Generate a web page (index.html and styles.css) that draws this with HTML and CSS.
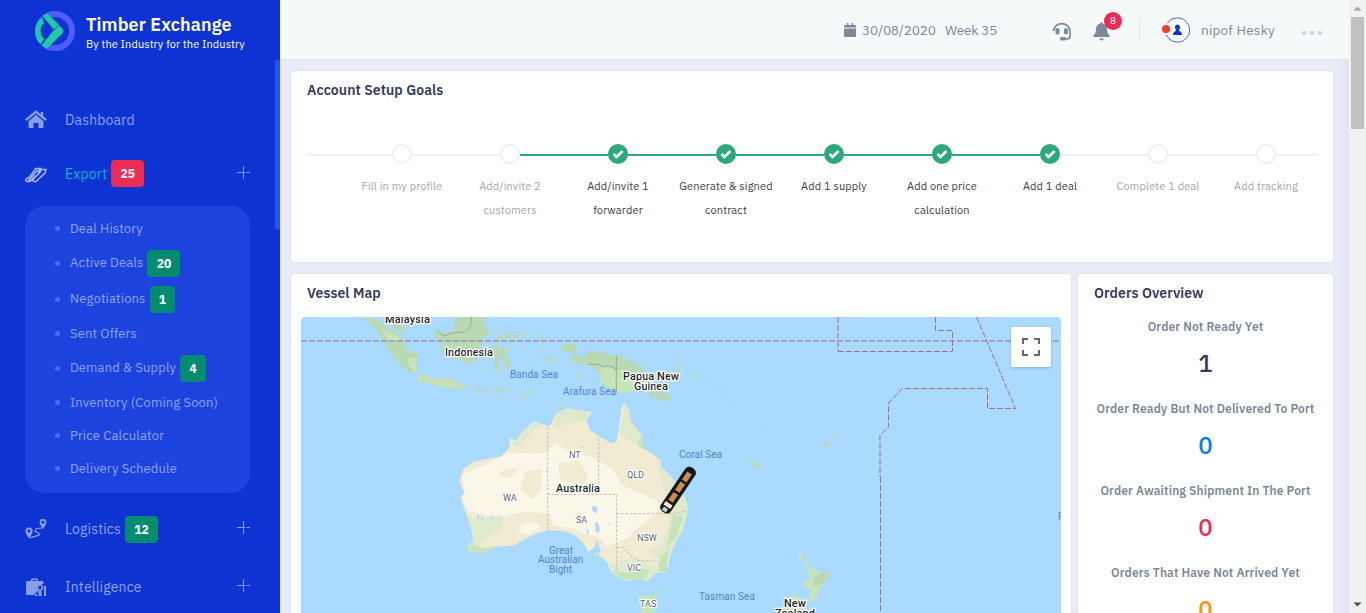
FILE: index.html
```html
<!DOCTYPE html>
<html lang="en">
<head>
<meta charset="utf-8">
<title>Timber Exchange</title>
<link rel="stylesheet" href="styles.css">
</head>
<body>
<div class="app">
  <aside class="sidebar">
    <div class="brand">
      <svg class="brand-logo" width="40" height="40" viewBox="0 0 120 120">
        <circle cx="60" cy="60" r="51" fill="none" stroke="#4e5dff" stroke-width="18"/>
        <path d="M38 7Q0 24 0 60T31 112L85 60Z" fill="#0d33d2"/>
        <path d="M22 18Q0 34 0 61T18 100L28 84Q18 76 17 59T27 38Z" fill="#23c9a4"/>
        <path d="M24 16L37 8 70 41 57 57Z" fill="#23c9a4" stroke="#23c9a4" stroke-width="3" stroke-linejoin="round"/>
        <path d="M57 58L70 42 83 56Q86 61 82 66L35 112 21 103Z" fill="#23c9a4" stroke="#23c9a4" stroke-width="3" stroke-linejoin="round"/>
        <path d="M20 15l40 44M54 60l17-18M18 100l10-14" stroke="#0d33d2" stroke-width="2"/>
      </svg>
      <div class="brand-text"><strong>Timber Exchange</strong><span>By the Industry for the Industry</span></div>
    </div>
    <nav class="menu">
      <div class="menu-item item-dashboard">
        <svg class="menu-icon" width="22" height="20" viewBox="0 0 22 20"><path d="M11 4.600L3.500 11v6q0 1 1 1h4v-5h5v5h4q1 0 1-1v-6z"/><path d="M.8 10.200L11 1.800l10.200 8.400M17 2v5" fill="none" stroke="#8b9ee9" stroke-width="2.300"/><path d="M2.500 11.300L11 4.300l8.500 7" fill="none" stroke="#0d33d2" stroke-width=".8"/></svg>
        <span class="menu-label">Dashboard</span>
      </div>
      <div class="menu-item item-export active">
        <svg class="menu-icon" width="22" height="20" viewBox="0 0 22 20"><g fill="none" stroke="#a9b7ee" stroke-width="1.500"><path d="M.7 17.500v-1.800Q7 11 9 6.500M4 17.500v-2Q9 11 12 6M8 17.500v-2Q13 11 15.500 6M9 6l2-1.500h4.500L12.500 8M15 7l1.500-1.500H21L20 9l-9 8.500H8M1 17.500h3l7-6M5 17.500l11-10"/></g></svg>
        <span class="menu-label">Export</span><b class="badge badge-red">25</b>
        <svg class="plus" width="13" height="13"><path d="M0 6.500h8M9.500 6.500H13M6.500 0v13"/></svg>
      </div>
      <ul class="submenu">
        <li><span>Deal History</span></li>
        <li class="tall"><span>Active Deals</span><b class="badge">20</b></li>
        <li class="tall"><span>Negotiations</span><b class="badge">1</b></li>
        <li><span>Sent Offers</span></li>
        <li class="tall"><span>Demand &amp; Supply</span><b class="badge">4</b></li>
        <li><span>Inventory (Coming Soon)</span></li>
        <li><span>Price Calculator</span></li>
        <li><span>Delivery Schedule</span></li>
      </ul>
      <div class="menu-item item-logistics">
        <svg class="menu-icon" width="22" height="20" viewBox="0 0 22 20"><path fill-rule="evenodd" d="M4 8.500a3.500 3.500 0 0 1 3.600 3.500Q7.500 14.500 4 19.500.4 14.500.4 12A3.500 3.500 0 0 1 4 8.500zm0 2a1.500 1.500 0 1 0 .01 0zM18 0a3.300 3.300 0 0 1 3.400 3.300Q21.300 5.500 18 10q-3.400-4.500-3.400-6.700A3.300 3.300 0 0 1 18 0zm0 1.800a1.500 1.500 0 1 0 .01 0z"/><path d="M5 18.800l9-2.600.5-1.200-4.500-3 1.500-2.500 6-.5" fill="none" stroke="#8b9ee9" stroke-width="1.200"/></svg>
        <span class="menu-label">Logistics</span><b class="badge">12</b>
        <svg class="plus" width="13" height="13"><path d="M0 6.500h8M9.500 6.500H13M6.500 0v13"/></svg>
      </div>
      <div class="menu-item item-intelligence">
        <svg class="menu-icon" width="22" height="20" viewBox="0 0 22 20"><path fill-rule="evenodd" d="M2 4h4V2.500Q6 1.500 7 1.500h5q1 0 1 1V4h4q1.500 0 1.500 1.500V7l-3 .5-3 1.500-1 3 .5 2-3 4H2.500Q1 18 1 16.500v-11Q1 4 2 4zm5.500 0h4V3h-4z"/><circle cx="15" cy="10.500" r="2.500" fill="none" stroke="#8b9ee9" stroke-width="1.400"/><path d="M10 17h2v2h-2zM13.500 14h3v5h-3zM19 9h2v10h-2z"/><path d="M13.500 12.500L10.500 15.500" stroke="#8b9ee9" stroke-width="1.500"/></svg>
        <span class="menu-label">Intelligence</span>
        <svg class="plus" width="13" height="13"><path d="M0 6.500h8M9.500 6.500H13M6.500 0v13"/></svg>
      </div>
    </nav>
    <div class="sidebar-thumb"></div>
  </aside>

  <main class="main">
    <header class="topbar">
      <svg class="calendar" width="12" height="14" viewBox="0 0 12 14" fill="#7c8a97"><path d="M1 2h2V0h1.500v2h3V0H9v2h2q1 0 1 1v1.500H0V3q0-1 1-1zM0 5.500h12V13q0 1-1 1H1q-1 0-1-1z"/></svg>
      <span class="date">30/08/2020</span>
      <span class="week">Week 35</span>
      <svg class="headset" width="20" height="20" viewBox="0 0 20 20"><path d="M1.500 10A8.300 8.300 0 0 1 18 10v5q0 3-3 3h-4" fill="none" stroke="#7c8a97" stroke-width="1.700"/><rect x="3.500" y="7" width="4" height="6.500" rx="1.800" fill="#7c8a97"/><rect x="12" y="7" width="4" height="6.500" rx="1.800" fill="#7c8a97"/><rect x="8" y="16" width="6" height="3.500" rx="1.500" fill="#7c8a97"/></svg>
      <div class="bell">
        <svg width="17" height="19" viewBox="0 0 17 19" fill="#7c8a97"><path d="M8.500 0q1.200 0 1.200 1.500 4.300 1 4.300 5.500 0 4.500 2.500 6.500.7 1.500-.8 1.500H1.300Q-.2 15 .5 13.500 3 11.500 3 7q0-4.500 4.300-5.500Q7.300 0 8.500 0zM6 16.500h5q-.5 2-2.500 2t-2.500-2z"/></svg>
        <span class="bell-count">8</span>
      </div>
      <div class="divider"></div>
      <svg class="avatar" width="30" height="28" viewBox="0 0 30 28"><circle cx="16.500" cy="14" r="12.200" fill="#fff" stroke="#4a63e8"/><path d="M16.500 8.500a2.800 2.800 0 0 1 1.500 5q0 2 1.500 2.300 1.500.4 1.500 3.200h-9q0-2.800 1.500-3.200 1.500-.3 1.500-2.300a2.800 2.800 0 0 1 1.500-5z" fill="#0d33d2"/><circle cx="5" cy="13" r="6" fill="#f5f9fa"/><circle cx="5" cy="13" r="4" fill="#ff3b1f"/></svg>
      <span class="user">nipof Hesky</span>
      <div class="more"><i></i><i></i><i></i></div>
    </header>

    <div class="content">
      <section class="card goals">
        <h2>Account Setup Goals</h2>
        <div class="steps">
          <div class="lead"></div>
          <div class="step"><div class="track"><i></i><b></b><i></i></div><p>Fill in my profile</p></div>
          <div class="step"><div class="track"><i></i><b></b><i class="on"></i></div><p>Add/invite 2<br>customers</p></div>
          <div class="step done"><div class="track"><i></i><b><svg width="12" height="10"><path d="M1.500 5l3 3 6-6"/></svg></b><i></i></div><p>Add/invite 1<br>forwarder</p></div>
          <div class="step done"><div class="track"><i></i><b><svg width="12" height="10"><path d="M1.500 5l3 3 6-6"/></svg></b><i></i></div><p>Generate &amp; signed<br>contract</p></div>
          <div class="step done"><div class="track"><i></i><b><svg width="12" height="10"><path d="M1.500 5l3 3 6-6"/></svg></b><i></i></div><p>Add 1 supply</p></div>
          <div class="step done"><div class="track"><i></i><b><svg width="12" height="10"><path d="M1.500 5l3 3 6-6"/></svg></b><i></i></div><p>Add one price<br>calculation</p></div>
          <div class="step done"><div class="track"><i></i><b><svg width="12" height="10"><path d="M1.500 5l3 3 6-6"/></svg></b><i class="off"></i></div><p>Add 1 deal</p></div>
          <div class="step"><div class="track"><i></i><b></b><i></i></div><p>Complete 1 deal</p></div>
          <div class="step"><div class="track"><i></i><b></b><i class="short"></i></div><p>Add tracking</p></div>
        </div>
      </section>

      <div class="row">
        <section class="card vessel">
          <h2>Vessel Map</h2>
          <div class="map">
            <svg width="760" height="296" viewBox="301 317 760 296">
              <!-- Indonesia, Malaysia and New Guinea -->
              <g transform="translate(290 270) scale(.33333)" fill="#b9d9b4">
                <path d="M213 138L262 150 290 173 310 181 330 199 344 218 350 240 380 256 379 310 365 308 345 300 322 276 300 245 280 220 262 186 240 162Z"/>
                <path d="M298 141L318 150 335 168 350 190 340 191 312 178Z"/>
                <path d="M498 141L585 141 583 160 600 192 580 202 576 225 556 250 555 277 530 281 510 270 470 262 455 245 452 222 433 205 434 180 450 190 480 186 495 165Z"/>
                <path d="M376 320L395 314 440 325 460 325 480 327 510 340 528 353 515 359 450 350 420 342 385 332Z" fill="#c4e1b7"/>
                <path d="M360 240L378 247 392 262 380 265ZM407 260l12 2-5 6z"/>
                <path d="M625 197L650 193 690 195 705 185 702 196 675 207 645 203 625 207 622 230 640 236 675 225 652 240 646 254 665 285 660 300 642 285 635 262 626 265 626 305 612 306 615 270 606 250 612 220Z"/>
                <path d="M748 183l8 15 8-13-3 22 7 7-12 10-4-15zM758 263l30 1 17 8-15 4-30-6zM727 268l15 2-6 7zM700 240l20 4-18 1zM535 355l18 3-8 4zM556 355l15-1 1 12-9 1zM575 362l30-4-3 8-25 1zM615 358l47 1-15 6-30-2zM608 373l25 10-4 5zM685 380l30-17 25-6-26 14-24 14zM865 306l8 15-6 11-5-9zM750 236l8 5-5 5zM235 190l8 4-3 8zM257 232l6 3-3 7z"/>
                <path d="M805 234L825 222 855 222 862 250 855 250 875 265 905 241 940 250 1000 262 1055 290 1060 312 1100 360 1140 378 1140 394 1085 382 1070 362 1045 350 1015 370 980 370 945 350 930 335 940 325 928 310 895 283 870 284 840 270 855 250 830 245Z"/>
                <path d="M928 300L955 290 1035 310 1050 350 1015 368 980 368 930 335ZM350 265L379 263 378 309 365 300ZM270 175L310 190 335 210 300 212Z" fill="#c5e4b7"/>
                <path d="M441 178q10 18 27 19 20-12 55-10 18-10 20-30l2-16M893 283q35-2 50 8 17-8 35 8M979 256v114" fill="none" stroke="#98ab9f" stroke-width="3"/>
              </g>
              <!-- Pacific islands -->
              <g transform="translate(660 270) scale(.33333)" fill="#b9d9b4">
                <path d="M35 258q28 12 38 32l-14-12zM53 286l8 10-6 14-22 4 15-10zM100 308l10 2 14 18-12-6zM135 328l14 10-4 2zM144 352l10 2-4 3zM172 346l14 8-4 4zM204 358l12 15-5-4zM188 377l15 2-4 5zM216 388l14 10-4 2zM0 365l10 2 12 16 14 8-20 2-16-6zM303 472l12 10-5 2zM318 488l6 8zM489 519q10-8 21 0v8q-12 6-20-1zM512 501l20-8-1 8-12 6zM263 567q20 4 42 31l-7 3q-25-13-35-34z"/>
              </g>
              <!-- Australia -->
              <g transform="translate(440 400) scale(.33333)">
                <path fill="#f0ebd2" d="M553 10L568 30 572 65 590 85 605 105 610 145 635 160 660 180 665 203 690 225 710 255 734 290 743 325 740 350 728 390 705 430 690 470 680 517 650 518 622 541 610 540 602 525 572 543 545 535 520 522 508 505 502 485 475 465 482 450 470 420 465 440 445 457 430 430 405 405 370 393 330 390 290 400 260 415 220 437 165 440 130 460 90 452 85 438 100 425 95 390 82 350 62 295 72 278 58 240 70 208 100 185 150 175 185 168 210 140 208 115 235 125 240 103 280 65 305 72 325 80 335 70 345 45 370 30 385 23 405 30 457 35 440 60 450 90 480 112 515 130 530 125 540 60 545 25Z"/>
                <path fill="#faf6e8" d="M64 225L120 200 200 160 320 158 345 128 380 150 440 165 490 190 525 215 545 255 600 280 650 300 660 330 610 370 560 415 500 440 475 410 430 400 400 385 340 378 330 340 250 335 190 350 140 345 90 335 66 295 75 270ZM245 372l45-5 10 15-40 24-25-10z"/>
                <path fill="#f0ebd2" d="M255 215l50-8v60l-30 30-35-30zM190 210l50-8-30 32-30-10zM355 190l60-10 30 45-15 35-70-20z"/>
                <path fill="#dfe9cc" d="M553 12L568 30 572 65 590 85 605 105 610 145 580 130 540 100ZM345 45L370 30 385 25 455 36 440 58 425 66 385 70 345 85ZM245 105L280 68 305 75 265 105 235 140 212 135ZM85 350L115 360 185 345 190 380 140 415 120 440 165 440 130 460 90 452 85 435 100 420ZM645 165L665 203 690 225 710 255 734 290 743 325 740 350 728 390 705 430 690 470 650 475 625 450 665 435 680 400 690 350 670 260ZM508 490L590 475 650 500 680 495 680 517 650 518 622 541 602 525 572 543 530 530Z"/>
                <path fill="#c7e4b9" d="M700 345l30 10-25 60-25 25zM660 470l25-20-5 65-25 2zM515 510l45 10 20-20 45 10-5 26-48 4-40-10zM605 105l8 45-20-15zM90 430l40 15 35-5-35 20-40-6zM705 250l25 35-20 5zM595 588l55-2 2 40-30 20-15-5z"/>
                <path fill="#c7e4b9" d="M345 20l20-5v8zM368 20l12-6v8zM456 462l16-8v12zM455 478l17-2v6zM588 568l8 5-3 3zM647 565l6 10-5 4z"/>
                <path fill="#aadaff" d="M456 318l15 4v18l-14-6zM466 365l8 5 6 20-8 12-5-10zM438 385l8 5-2 18zM505 370l5 3-3 8zM110 345l5 20 4-18zM122 350h10l-5 14zM152 345l6 4-2 10zM422 142l10-2-3 6zM316 213l8-3v8z"/>
                <path fill="none" stroke="#c3beb2" stroke-width="3" stroke-dasharray="8 5" d="M323 82V394M323 283H530V510M476 115V283M530 341H705L740 332M530 442h20l22 25 18 14 60 3 18 20 12 5"/>
              </g>
              <!-- New Zealand -->
              <g transform="translate(720 400) scale(.33333)">
                <path fill="#c7e4b9" d="M233 453L255 470 262 495 285 510 300 520 327 516 325 535 300 565 285 600 265 603 275 575 246 555 266 535 262 500 240 475ZM205 605l18-23 12 5 3 13 15 5-25 34h-60z"/>
                <path fill="#b9d9b4" d="M300 520l27-4-2 19-25 20-25 5 10-30zM240 462l15 10 2 18z"/>
              </g>
              <g class="borders">
                <path class="thick" d="M301 341H1061M838 317v34M880 435v42"/>
                <path d="M838 351.500H952.500V330.500H935.500V317M976.500 317L1015.500 408.500H987.500V388.500H902.500L888.500 403V427L880.500 435M880.500 477V613"/>
              </g>
              <g class="country">
                <text x="385" y="323" textLength="45">Malaysia</text>
                <text x="445" y="356" textLength="48">Indonesia</text>
                <text x="623" y="380" textLength="56">Papua New</text>
                <text x="634" y="389.500" textLength="34">Guinea</text>
                <text x="556" y="492" textLength="44">Australia</text>
                <text x="784" y="607" textLength="22">New</text>
                <text x="775" y="616.500" textLength="40">Zealand</text>
              </g>
              <g class="state">
                <text x="569" y="458">NT</text><text x="627" y="478">QLD</text><text x="503" y="501">WA</text>
                <text x="576" y="523">SA</text><text x="637" y="541">NSW</text><text x="627" y="571">VIC</text><text x="640" y="607">TAS</text>
              </g>
              <g class="sea">
                <text x="510" y="377.500" textLength="48">Banda Sea</text>
                <text x="563" y="394.500" textLength="53">Arafura Sea</text>
                <text x="679" y="457.500" textLength="43">Coral Sea</text>
                <text x="549" y="553.500" textLength="24">Great</text>
                <text x="538" y="562.500" textLength="45">Australian</text>
                <text x="549" y="572.500" textLength="23">Bight</text>
                <text x="699" y="599.500" textLength="56">Tasman Sea</text>
                <text x="1058" y="520">P</text>
              </g>
              <!-- Vessel -->
              <g transform="translate(677.800 490.500) rotate(34)">
                <rect x="-6" y="-27" width="12" height="53" rx="5" fill="#191614"/>
                <path d="M-2.700-21h5.400v9.500h-5.400zM-2.700-9h5.400V1h-5.400zM-2.700 3.500h5.400v9.500h-5.400z" fill="#c88e55"/>
                <path d="M-4 15.500h8v4h-8z" fill="#fff4df"/><path d="M-2.500 21h5v4h-5z" fill="#c9cbd2"/>
              </g>
            </svg>
            <button class="fullscreen" aria-label="Full screen"><svg width="18" height="18"><path d="M1 6V1H6M12 1h5V6M17 12v5h-5M6 17H1v-5"/></svg></button>
          </div>
        </section>

        <section class="card orders">
          <h2>Orders Overview</h2>
          <div class="stat"><h3>Order Not Ready Yet</h3><strong>1</strong></div>
          <div class="stat"><h3>Order Ready But Not Delivered To Port</h3><strong class="blue">0</strong></div>
          <div class="stat"><h3>Order Awaiting Shipment In The Port</h3><strong class="red">0</strong></div>
          <div class="stat"><h3>Orders That Have Not Arrived Yet</h3><strong class="orange">0</strong></div>
        </section>
      </div>
    </div>
  </main>

  <div class="scrollbar">
    <svg width="17" height="17"><path d="M4.500 10.500h8l-4-4z" fill="#a3a3a3"/></svg>
    <div class="scroll-thumb"></div>
    <svg width="17" height="17"><path d="M4.500 6.500h8l-4 4z" fill="#505050"/></svg>
  </div>
</div>
</body>
</html>
```
FILE: styles.css
```css
* { box-sizing: border-box; }
body { margin: 0; overflow: hidden; font-family: "IBM Plex Sans", Roboto, "Liberation Sans", sans-serif; color: #343a5c; }
h2, h3, p, ul { margin: 0; padding: 0; }
svg { display: block; flex: none; }
.app { display: flex; width: 1366px; height: 613px; overflow: hidden; background: #e9ebf7; }

/* Sidebar */
.sidebar { position: relative; flex: none; width: 280px; height: 613px; overflow: hidden; background: #0d33d2; }
.brand { display: flex; gap: 11px; height: 93px; padding: 11px 0 0 35px; color: #fff; white-space: nowrap; }
.brand-text { display: flex; flex-direction: column; padding-top: 3px; }
.brand-text strong { font-size: 18px; line-height: 22px; font-weight: 600; letter-spacing: .1px; }
.brand-text span { font-size: 11px; line-height: 16px; letter-spacing: .1px; }
.menu-item { display: flex; align-items: center; padding: 0 30px 0 25px; color: #8fa3ec; font-size: 14px; }
.menu-icon { fill: #8b9ee9; margin-right: 18px; }
.menu-label { letter-spacing: .16px; }
.item-dashboard { height: 54px; }
.item-export { height: 53px; margin-bottom: 6px; }
.active .menu-label { color: #00b5d1; }
.item-logistics { height: 58px; margin-top: 7px; }
.item-intelligence { height: 58px; }
.plus { margin: -3px 0 0 auto; fill: none; stroke: #8b9ee9; }
.badge { display: inline-flex; align-items: center; justify-content: center; height: 27px; margin-left: 4px; padding: 0 9.300px; border-radius: 4px; background: #028c6f; color: #fff; font-size: 12px; font-weight: 700; letter-spacing: 0; }
.badge-red { background: #ed2c54; }
.submenu { width: 225px; height: 287px; margin-left: 25px; padding: 6px 0 8px 30px; border-radius: 20px; background: #1d43df; color: #8fa3ec; list-style: none; font-size: 13px; letter-spacing: .13px; }
.submenu li { display: flex; align-items: center; height: 33px; }
.submenu .tall { height: 36px; }
.submenu .tall span { padding-bottom: 2px; }
.submenu li::before { content: ""; width: 5px; height: 5px; margin-right: 10px; border-radius: 50%; background: #4b6bea; }
.sidebar-thumb { position: absolute; top: 60px; right: 0; width: 5px; height: 170px; border-radius: 2px; background: #2550fb; }

/* Top bar */
.main { flex: none; width: 1069px; height: 613px; overflow: hidden; box-shadow: inset -14px 0 12px -10px #dfe1ef; }
.topbar { display: flex; align-items: center; height: 60px; padding-left: 564px; border-bottom: 1px solid #e3e6ea; background: #f5f9fa; color: #7c8995; font-size: 13.500px; white-space: nowrap; }
.date { width: 83px; padding-left: 6px; letter-spacing: -.15px; }
.week { width: 107px; padding-left: 6px; letter-spacing: -.15px; }
.calendar { flex: none; }
.headset { margin: 3px 0 0 6px; }
.bell { position: relative; margin: 4px 0 0 21px; }
.bell-count { position: absolute; left: 11px; top: -10px; width: 18px; height: 18px; border-radius: 50%; background: #ed2c54; color: #fff; font-size: 10px; line-height: 18px; text-align: center; }
.divider { width: 1px; height: 23px; margin: 0 21px 0 29px; background: #e1e5e8; }
.user { width: 111px; padding-left: 10px; letter-spacing: .25px; }
.more { display: flex; gap: 4px; padding-top: 6px; }
.more i { width: 4px; height: 4px; border-radius: 50%; background: #c9d1f5; }

/* Cards */
.content { display: flex; flex-direction: column; gap: 10px; padding: 10px 15px 0 10px; }
.card { border: 1px solid #e1e3f1; border-radius: 4px; background: #fff; }
.card h2 { padding-left: 16px; font-size: 14px; line-height: 20px; font-weight: 600; letter-spacing: .08px; }
.goals { height: 193px; padding-top: 9px; }
.steps { display: flex; padding: 44px 0 0 15px; }
.lead { width: 42px; height: 2px; margin-top: 10px; background: #edf1f5; }
.step { flex: none; width: 108px; color: #a5a5a7; text-align: center; }
.track { display: flex; align-items: center; height: 20px; }
.track i { flex: none; width: 44px; height: 2px; margin-top: 2px; background: #edf1f5; }
.track .short { width: 42px; }
.track b { display: flex; align-items: center; justify-content: center; width: 20px; height: 20px; border: 2px solid #edf1f5; border-radius: 50%; }
.track svg { fill: none; stroke: #fff; stroke-width: 2.500; }
.step p { padding-top: 10px; font-size: 11px; line-height: 24px; letter-spacing: .13px; white-space: nowrap; }
.done { color: #3b3b42; }
.done .track i, .track .on { background: #2da77b; }
.done .track b { border-color: #2da77b; background: #2da77b; }
.done .track .off { background: #edf1f5; }

.row { display: flex; gap: 5px; }
.vessel { width: 782px; height: 400px; padding-top: 9px; }
.map { position: relative; width: 760px; height: 296px; margin: 14px 0 0 10px; border-radius: 4px 4px 0 0; background: #aadaff; overflow: hidden; }
.map text { font-family: Roboto, sans-serif; }
.borders { fill: none; stroke: #a36d83; stroke-width: 1; stroke-dasharray: 6 2; }
.borders .thick { stroke: #a5a1c1; stroke-width: 2; }
.country { font-size: 11px; font-weight: 500; fill: #1e1e20; stroke: #fff; stroke-width: 2.500px; paint-order: stroke; }
.state { font-size: 9px; fill: #5c6570; stroke: #fff; stroke-width: 2px; paint-order: stroke; }
.sea { font-size: 10px; fill: #5182cf; }
.fullscreen { position: absolute; top: 10px; right: 10px; display: flex; align-items: center; justify-content: center; width: 40px; height: 40px; padding: 0; border: 0; border-radius: 2px; background: #fff; box-shadow: 0 1px 3px #0003; }
.fullscreen svg { fill: none; stroke: #666; stroke-width: 2; }
.orders { width: 257px; height: 400px; padding-top: 9px; }
.stat { height: 82px; padding-top: 14px; color: #343a5c; text-align: center; }
.stat h3 { font-size: 12px; line-height: 20px; font-weight: 600; letter-spacing: .15px; color: #7c8995; white-space: nowrap; }
.stat strong { display: block; padding-top: 9px; font-size: 24px; line-height: 34px; font-weight: 500; }
.stat .blue { color: #087cf0; }
.stat .red { color: #ed2c54; }
.stat .orange { color: #ff9500; }

/* Page scrollbar */
.scrollbar { display: flex; flex: none; flex-direction: column; width: 17px; height: 613px; background: #f1f1f1; }
.scroll-thumb { width: 13px; height: 112px; margin: 0 2px 467px; background: #c1c1c1; }
```
